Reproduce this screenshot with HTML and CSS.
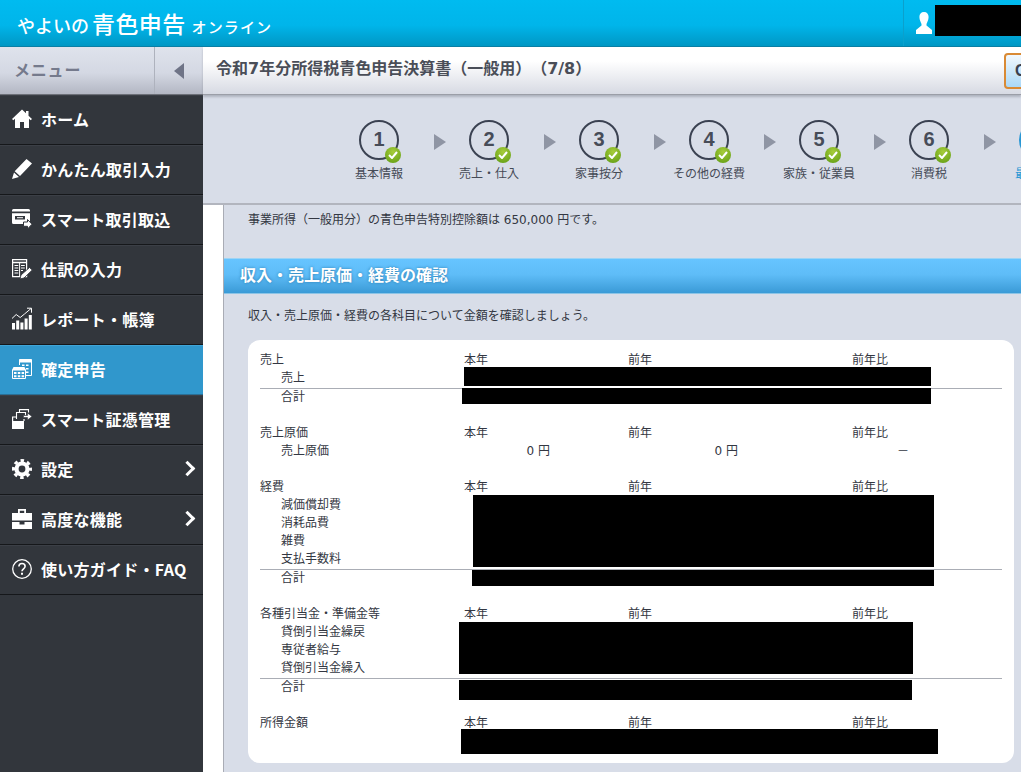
FILE: index.html
```html
<!DOCTYPE html>
<html lang="ja">
<head>
    <meta charset="UTF-8">
    <meta name="viewport" content="width=device-width, initial-scale=1.0">
    <title>やよいの青色申告 オンライン</title>
    <link rel="stylesheet" href="styles.css">
</head>
<body>

    <!-- Top bar -->
    <header class="top-bar">
        <div class="logo"><span class="logo-a">やよいの</span><span class="logo-b">青色申告</span><span class="logo-c">オンライン</span></div>
        <div class="user-box">
            <svg class="user-icon" viewBox="0 0 16 22" width="16" height="22"><path d="M8 0c3 0 4.600 2 4.600 5S11 10.500 10.500 12v1.500L16 18v4H0v-4l5.500-4.500V12C5 10.500 3.400 8 3.400 5S5 0 8 0z" fill="#fff"/></svg>
            <div class="user-name"></div>
        </div>
    </header>

    <div class="page">

        <!-- Side menu -->
        <nav class="side">
            <div class="side-head">
                <div class="side-title">メニュー</div>
                <div class="side-toggle"><span class="toggle-arrow"></span></div>
            </div>
            <a class="side-item">
                <svg class="side-icon" viewBox="0 0 20 20"><path d="M10 0.500 0 10l1.300 1.300L3 9.700V19h5v-6h4v6h5V9.700l1.700 1.600L20 10l-3.500-3.300V2H14v2.300z" fill="#fff"/></svg>
                ホーム
            </a>
            <a class="side-item">
                <svg class="side-icon" viewBox="0 0 20 20"><path d="M14.500 0 20 4.500 8 17 2.700 12.300zM2 13.500l5 4.400L0 20z" fill="#fff"/></svg>
                かんたん取引入力
            </a>
            <a class="side-item">
                <svg class="side-icon" viewBox="0 0 20 20" fill="none"><path d="M1.500 0h15A1.500 1.500 0 0 1 18 1.500V2.600H0V1.500A1.500 1.500 0 0 1 1.500 0zM0 4.200h18V13.500a1.500 1.500 0 0 1-1.500 1.500h-15A1.500 1.500 0 0 1 0 13.500z" fill="#fff"/><path d="M3 7h10v3.500H3z" fill="#32363c"/><path d="M5 8.200h6v1H5z" fill="#fff"/><path d="M11.500 13h4v-2.500l4.500 4.700-4.500 4.800v-2.700h-4z" fill="#fff" stroke="#32363c" stroke-width="1"/></svg>
                スマート取引取込
            </a>
            <a class="side-item">
                <svg class="side-icon" viewBox="0 0 20 20" fill="none"><path d="M.6.600h14v17H.6z" stroke="#fff" stroke-width="1.200"/><path d="M1 3.500h13" stroke="#fff" stroke-width="1.500"/><path d="M7.600 3.500v14" stroke="#fff" stroke-width="1"/><path d="M2.500 6.500h3.800M2.500 9h3.800M2.500 11.500h3.800M2.500 14h3.800M9 6.500h3.800M9 9h3.800M9 11.500h2" stroke="#fff" stroke-width="1.200"/><path d="M17.500 8.500 20.300 11 12 19l-4 1 1-4z" fill="#fff" stroke="#32363c" stroke-width=".9"/></svg>
                仕訳の入力
            </a>
            <a class="side-item">
                <svg class="side-icon" viewBox="0 0 20 20" fill="none"><path d="M0 14h3v6.500H0zM4.200 11.500h3v9h-3zM8.400 13.500h3v7h-3zM12.600 9.500h3v11h-3zM16.800 6h3v14.500h-3z" fill="#fff"/><path d="M0 9.500l4.200-4 4 3 4.300-3.500L19 -.5" stroke="#fff" stroke-width="1"/><path d="M15 -.8h4.500V3.700" stroke="#fff" stroke-width="1"/></svg>
                レポート・帳簿
            </a>
            <a class="side-item is-active">
                <svg class="side-icon" viewBox="0 0 20 20" fill="none"><path d="M7.500 6V.5h12v16H14" stroke="#fff" stroke-width="1"/><path d="M7.500 .5h12v3h-12z" fill="#fff"/><path d="M10 5.500h2.500V7H10zM14 5.500h2.500V7H14zM14 9h2.500v1.500H14zM14 12.500h2.500V14H14z" fill="#fff"/><path d="M.5 11h13v8.500H.5z" stroke="#fff" stroke-width="1"/><path d="M1.500 8h11l1.500 3H0zM2 13h2.500v2H2zM5.800 13h2.500v2H5.800zM9.600 13h2.500v2H9.600zM2 16.300h2.500v2H2zM5.800 16.300h2.500v2H5.800zM9.600 16.300h2.500v2H9.600z" fill="#fff"/></svg>
                確定申告
            </a>
            <a class="side-item">
                <svg class="side-icon" viewBox="0 0 20 20" fill="none"><path d="M0 12h12v8H0z" fill="#fff"/><path d="M.600 12V8h3.500M12 12V10" stroke="#fff" stroke-width="1.200"/><path d="M4.500 10V3.500h9v3M7.500 3.500V.6h9v3" stroke="#fff" stroke-width="1.100"/><path d="M11.500 6.500h4V4L20 7.500 15.500 11V8.500h-4z" fill="#fff" stroke="#32363c" stroke-width=".6"/></svg>
                スマート証憑管理
            </a>
            <a class="side-item">
                <svg class="side-icon" viewBox="0 0 20 20"><circle cx="10" cy="10" r="8.500" fill="none" stroke="#fff" stroke-width="3" stroke-dasharray="3.500 3.180" stroke-dashoffset="1.750"/><circle cx="10" cy="10" r="7.600" fill="#fff"/><circle cx="10" cy="10" r="3.400" fill="#32363c"/></svg>
                設定
                <span class="side-more"></span>
            </a>
            <a class="side-item">
                <svg class="side-icon" viewBox="0 0 20 20"><path fill="#fff" fill-rule="evenodd" d="M6 0h8v4h6v7.500H0V4h6zm1.800 1.800V4h4.400V1.800zM0 13h7.500v2.500h5V13H20v7H0z"/></svg>
                高度な機能
                <span class="side-more"></span>
            </a>
            <a class="side-item">
                <svg class="side-icon" viewBox="0 0 20 20" fill="none"><circle cx="10" cy="10" r="9.300" stroke="#fff" stroke-width="1.300"/><path d="M6.900 7.500C6.900 5.500 8.300 4.500 10 4.500s3.100 1 3.100 2.800c0 2.500-3.100 2.500-3.100 5" stroke="#fff" stroke-width="1.600"/><path d="M9 13.700h2v2H9z" fill="#fff"/></svg>
                使い方ガイド・FAQ
            </a>
        </nav>

        <main class="main">
            <div class="title-bar">
                <h1 class="title">令和7年分所得税青色申告決算書（一般用）（7/8）</h1>
                <button class="help-btn">C</button>
            </div>

            <!-- Steps -->
            <div class="steps">
                <div class="step"><div class="step-num">1<span class="step-ok"><svg viewBox="0 0 10 8" width="10" height="8"><path d="M1 4l3 3 5-6" fill="none" stroke="#fff" stroke-width="2"/></svg></span></div><p>基本情報</p></div>
                <span class="step-arrow"></span>
                <div class="step"><div class="step-num">2<span class="step-ok"><svg viewBox="0 0 10 8" width="10" height="8"><path d="M1 4l3 3 5-6" fill="none" stroke="#fff" stroke-width="2"/></svg></span></div><p>売上・仕入</p></div>
                <span class="step-arrow"></span>
                <div class="step"><div class="step-num">3<span class="step-ok"><svg viewBox="0 0 10 8" width="10" height="8"><path d="M1 4l3 3 5-6" fill="none" stroke="#fff" stroke-width="2"/></svg></span></div><p>家事按分</p></div>
                <span class="step-arrow"></span>
                <div class="step"><div class="step-num">4<span class="step-ok"><svg viewBox="0 0 10 8" width="10" height="8"><path d="M1 4l3 3 5-6" fill="none" stroke="#fff" stroke-width="2"/></svg></span></div><p>その他の経費</p></div>
                <span class="step-arrow"></span>
                <div class="step"><div class="step-num">5<span class="step-ok"><svg viewBox="0 0 10 8" width="10" height="8"><path d="M1 4l3 3 5-6" fill="none" stroke="#fff" stroke-width="2"/></svg></span></div><p>家族・従業員</p></div>
                <span class="step-arrow"></span>
                <div class="step"><div class="step-num">6<span class="step-ok"><svg viewBox="0 0 10 8" width="10" height="8"><path d="M1 4l3 3 5-6" fill="none" stroke="#fff" stroke-width="2"/></svg></span></div><p>消費税</p></div>
                <span class="step-arrow"></span>
                <div class="step is-now"><div class="step-num">7</div><p>最終確認</p></div>
            </div>

            <div class="content-wrap">
                <div class="content">
                    <p class="lead">事業所得（一般用分）の青色申告特別控除額は 650,000 円です。</p>

                    <h2 class="section-head">収入・売上原価・経費の確認</h2>
                    <p class="note">収入・売上原価・経費の各科目について金額を確認しましょう。</p>

                    <div class="card">
                        <table class="sum-table">
                            <tr><th>売上</th><th>本年</th><th>前年</th><th>前年比</th></tr>
                            <tr class="sub"><td>売上</td><td></td><td></td><td></td></tr>
                            <tr class="sub total"><td>合計</td><td></td><td></td><td></td></tr>
                            <tr class="gap"><td colspan="4"></td></tr>

                            <tr><th>売上原価</th><th>本年</th><th>前年</th><th>前年比</th></tr>
                            <tr class="sub"><td>売上原価</td><td class="val1">0 円</td><td class="val2">0 円</td><td class="val3">－</td></tr>
                            <tr class="gap"><td colspan="4"></td></tr>

                            <tr><th>経費</th><th>本年</th><th>前年</th><th>前年比</th></tr>
                            <tr class="sub"><td>減価償却費</td><td></td><td></td><td></td></tr>
                            <tr class="sub"><td>消耗品費</td><td></td><td></td><td></td></tr>
                            <tr class="sub"><td>雑費</td><td></td><td></td><td></td></tr>
                            <tr class="sub"><td>支払手数料</td><td></td><td></td><td></td></tr>
                            <tr class="sub total"><td>合計</td><td></td><td></td><td></td></tr>
                            <tr class="gap"><td colspan="4"></td></tr>

                            <tr><th>各種引当金・準備金等</th><th>本年</th><th>前年</th><th>前年比</th></tr>
                            <tr class="sub"><td>貸倒引当金繰戻</td><td></td><td></td><td></td></tr>
                            <tr class="sub"><td>専従者給与</td><td></td><td></td><td></td></tr>
                            <tr class="sub"><td>貸倒引当金繰入</td><td></td><td></td><td></td></tr>
                            <tr class="sub total"><td>合計</td><td></td><td></td><td></td></tr>
                            <tr class="gap"><td colspan="4"></td></tr>

                            <tr><th>所得金額</th><th>本年</th><th>前年</th><th>前年比</th></tr>
                        </table>

                        <!-- blacked out amounts -->
                        <div class="mask m1"></div>
                        <div class="mask m2"></div>
                        <div class="mask m3"></div>
                        <div class="mask m4"></div>
                        <div class="mask m5"></div>
                        <div class="mask m6"></div>
                        <div class="mask m7"></div>
                    </div>
                </div>
            </div>
        </main>
    </div>

</body>
</html>
```

FILE: styles.css
```css
* {
    margin: 0;
    padding: 0;
    box-sizing: border-box;
}

body {
    width: 1021px;
    height: 772px;
    overflow: hidden;
    font-family: "DejaVu Sans", "Noto Sans CJK JP", sans-serif;
    font-size: 12px;
    color: #333742;
    background: #fff;
    text-spacing-trim: space-all;
}

/* Top bar */
.top-bar {
    height: 47px;
    display: flex;
    justify-content: space-between;
    background: linear-gradient(#00bbf0 0%, #00b5ea 55%, #0097c4 100%);
    border-bottom: 1px solid #0a7fa4;
    color: #fff;
}

.logo {
    padding: 5px 0 0 17px;
    display: flex;
    align-items: baseline;
    height: 41px;
    line-height: 36px;
    font-family: "Noto Sans CJK JP", sans-serif;
    font-weight: 500;
}

.logo-a { font-size: 18px; }
.logo-b { font-size: 23px; letter-spacing: .4px; margin-left: 3px; }
.logo-c { font-size: 15px; letter-spacing: 1.100px; margin-left: 6px; }

.user-box {
    width: 118px;
    display: flex;
    align-items: flex-start;
    border-left: 1px solid #0ba0cc;
    padding: 5px 0 0 12px;
    gap: 3px;
}

.user-icon { margin-top: 7px; flex-shrink: 0; }

.user-name {
    width: 86px;
    height: 31px;
    background: #000;
    flex-shrink: 0;
}

/* Page */
.page {
    display: flex;
    height: 725px;
}

.side {
    width: 203px;
    flex-shrink: 0;
    background: #32363c;
    font-family: "Noto Sans CJK JP", sans-serif;
}

.side-head {
    height: 48px;
    display: flex;
    background: linear-gradient(#dfe3ec 0%, #d4d8e3 55%, #b3b7c3 100%);
    border-bottom: 1px solid #6d7078;
}

.side-title {
    width: 155px;
    padding-left: 14px;
    font-size: 16px;
    font-weight: 700;
    letter-spacing: .8px;
    line-height: 45px;
    color: #757a8c;
    border-right: 1px solid #aeb2bd;
}

.side-toggle {
    flex: 1;
    display: flex;
    align-items: center;
    padding-left: 19px;
}

.toggle-arrow {
    width: 0;
    height: 0;
    border-top: 8px solid transparent;
    border-bottom: 8px solid transparent;
    border-right: 10px solid #6f7487;
    margin-top: 1px;
}

.side-item {
    height: 50px;
    display: flex;
    align-items: center;
    position: relative;
    padding: 0 0 2px 12px;
    gap: 9px;
    font-size: 16px;
    font-weight: 700;
    letter-spacing: .25px;
    color: #fff;
    border-bottom: 1px solid #15171a;
    border-top: 1px solid #3b3f46;
}

.side-item.is-active {
    background: #3097cc;
    border-top-color: #3fa5d8;
    border-bottom-color: #2a6f95;
}

.side-icon {
    width: 20px;
    height: 20px;
    flex-shrink: 0;
    overflow: visible;
}

.side-more {
    position: absolute;
    right: 10px;
    top: 17px;
    width: 11px;
    height: 11px;
    border-top: 3px solid #fff;
    border-right: 3px solid #fff;
    transform: rotate(45deg);
}

/* Main */
.main {
    flex: 1;
    min-width: 0;
    display: flex;
    flex-direction: column;
    background: #d8dde8;
}

.title-bar {
    height: 48px;
    display: flex;
    justify-content: space-between;
    align-items: center;
    padding: 0 0 0 13px;
    background: linear-gradient(#fff 0%, #fff 30%, #d7dae3 100%);
    border-bottom: 1px solid #9b9ea7;
    box-shadow: 0 2px 2px rgba(100, 104, 115, .35);
    position: relative;
}

.title {
    font-size: 16px;
    font-weight: 700;
    line-height: 20px;
    margin-bottom: 3px;
    color: #4a4e58;
    white-space: nowrap;
}

.help-btn {
    width: 40px;
    height: 36px;
    margin-right: -23px;
    text-align: left;
    padding-left: 9px;
    font: 700 16px "Liberation Sans", sans-serif;
    color: #3a4150;
    border: 2px solid #d98a35;
    border-radius: 4px;
    background: linear-gradient(#f2f8fd, #a9d8f8);
}

/* Steps */
.steps {
    height: 110px;
    flex-shrink: 0;
    display: flex;
    align-items: flex-start;
    padding: 25px 0 0 136px;
    border-bottom: 2px solid #b2b5be;
    overflow: hidden;
}

.step {
    width: 80px;
    flex-shrink: 0;
    display: flex;
    flex-direction: column;
    align-items: center;
}

.step p {
    margin-top: 5px;
    line-height: 18px;
    white-space: nowrap;
    color: #454a56;
}

.step-num {
    width: 40px;
    height: 40px;
    border: 2px solid #3b4252;
    border-radius: 50%;
    position: relative;
    text-align: center;
    font: 700 20px/35px "Liberation Sans", sans-serif;
    color: #474c58;
}

.step-ok {
    position: absolute;
    left: 24px;
    top: 25px;
    width: 16px;
    height: 16px;
    border-radius: 50%;
    background: radial-gradient(circle at 50% 30%, #a6cc3a, #5d9a12);
    display: flex;
    align-items: center;
    justify-content: center;
}

.step-arrow {
    width: 0;
    height: 0;
    flex-shrink: 0;
    margin: 14px 3px 0 15px;
    border-top: 8px solid transparent;
    border-bottom: 8px solid transparent;
    border-left: 12px solid #8f95a4;
}

.step.is-now .step-num {
    border-color: #2a97d4;
    background: #2a97d4;
    color: #fff;
}

.step.is-now p { color: #2a97d4; }

/* Content */
.content-wrap {
    flex: 1;
    min-height: 0;
    background: #fff;
    padding-left: 20px;
}

.content {
    height: 100%;
    background: #d8dde8;
    border-left: 1px solid #a9acb5;
}

.lead {
    padding: 5px 0 0 24px;
    line-height: 20px;
}

.section-head {
    margin-top: 28px;
    height: 36px;
    padding-left: 16px;
    font-size: 16px;
    font-weight: 700;
    line-height: 33px;
    color: #fff;
    text-shadow: 0 0 3px #2a7cb0;
    background: linear-gradient(#66c4ff 0%, #5fbdf8 45%, #3a9ad6 100%);
    border-top: 1px solid #9dd4f5;
    border-bottom: 1px solid #8cc4e6;
}

.note {
    padding: 12px 0 0 24px;
    line-height: 20px;
}

.card {
    position: relative;
    margin: 14px 7px 0 24px;
    height: 423px;
    padding: 11px 12px 0;
    background: #fff;
    border-radius: 12px;
}

.sum-table {
    width: 742px;
    table-layout: fixed;
    border-collapse: separate;
    border-spacing: 0;
    line-height: 18px;
}

.sum-table th,
.sum-table td {
    height: 18px;
    padding: 0;
    font-weight: 400;
    text-align: left;
    white-space: nowrap;
}

.sum-table th:nth-child(1) { width: 204px; }
.sum-table th:nth-child(2) { width: 164px; }
.sum-table th:nth-child(3) { width: 224px; }

.sum-table .sub td:first-child { padding-left: 21px; }

/* rule sits 1px below the row above */
.sum-table .total td {
    height: 19px;
    padding-top: 1px;
    background: linear-gradient(#aaadb5, #aaadb5) 0 1px / 100% 1px no-repeat;
}

.sum-table .sub.total td:first-child { padding-left: 21px; }

.sum-table .val1 { text-align: right; padding-right: 78px; }
.sum-table .val2 { text-align: right; padding-right: 114px; }
.sum-table .val3 { text-align: right; padding-right: 93px; }

/* black boxes over the amounts */
.mask {
    position: absolute;
    background: #000;
}

.m1 { left: 216px; top: 27px; width: 467px; height: 19px; }
.m2 { left: 214px; top: 48px; width: 469px; height: 16px; }
.m3 { left: 225px; top: 155px; width: 461px; height: 72px; }
.m4 { left: 224px; top: 230px; width: 462px; height: 16px; }
.m5 { left: 211px; top: 282px; width: 454px; height: 52px; }
.m6 { left: 211px; top: 340px; width: 453px; height: 20px; }
.m7 { left: 213px; top: 389px; width: 477px; height: 25px; }
```
